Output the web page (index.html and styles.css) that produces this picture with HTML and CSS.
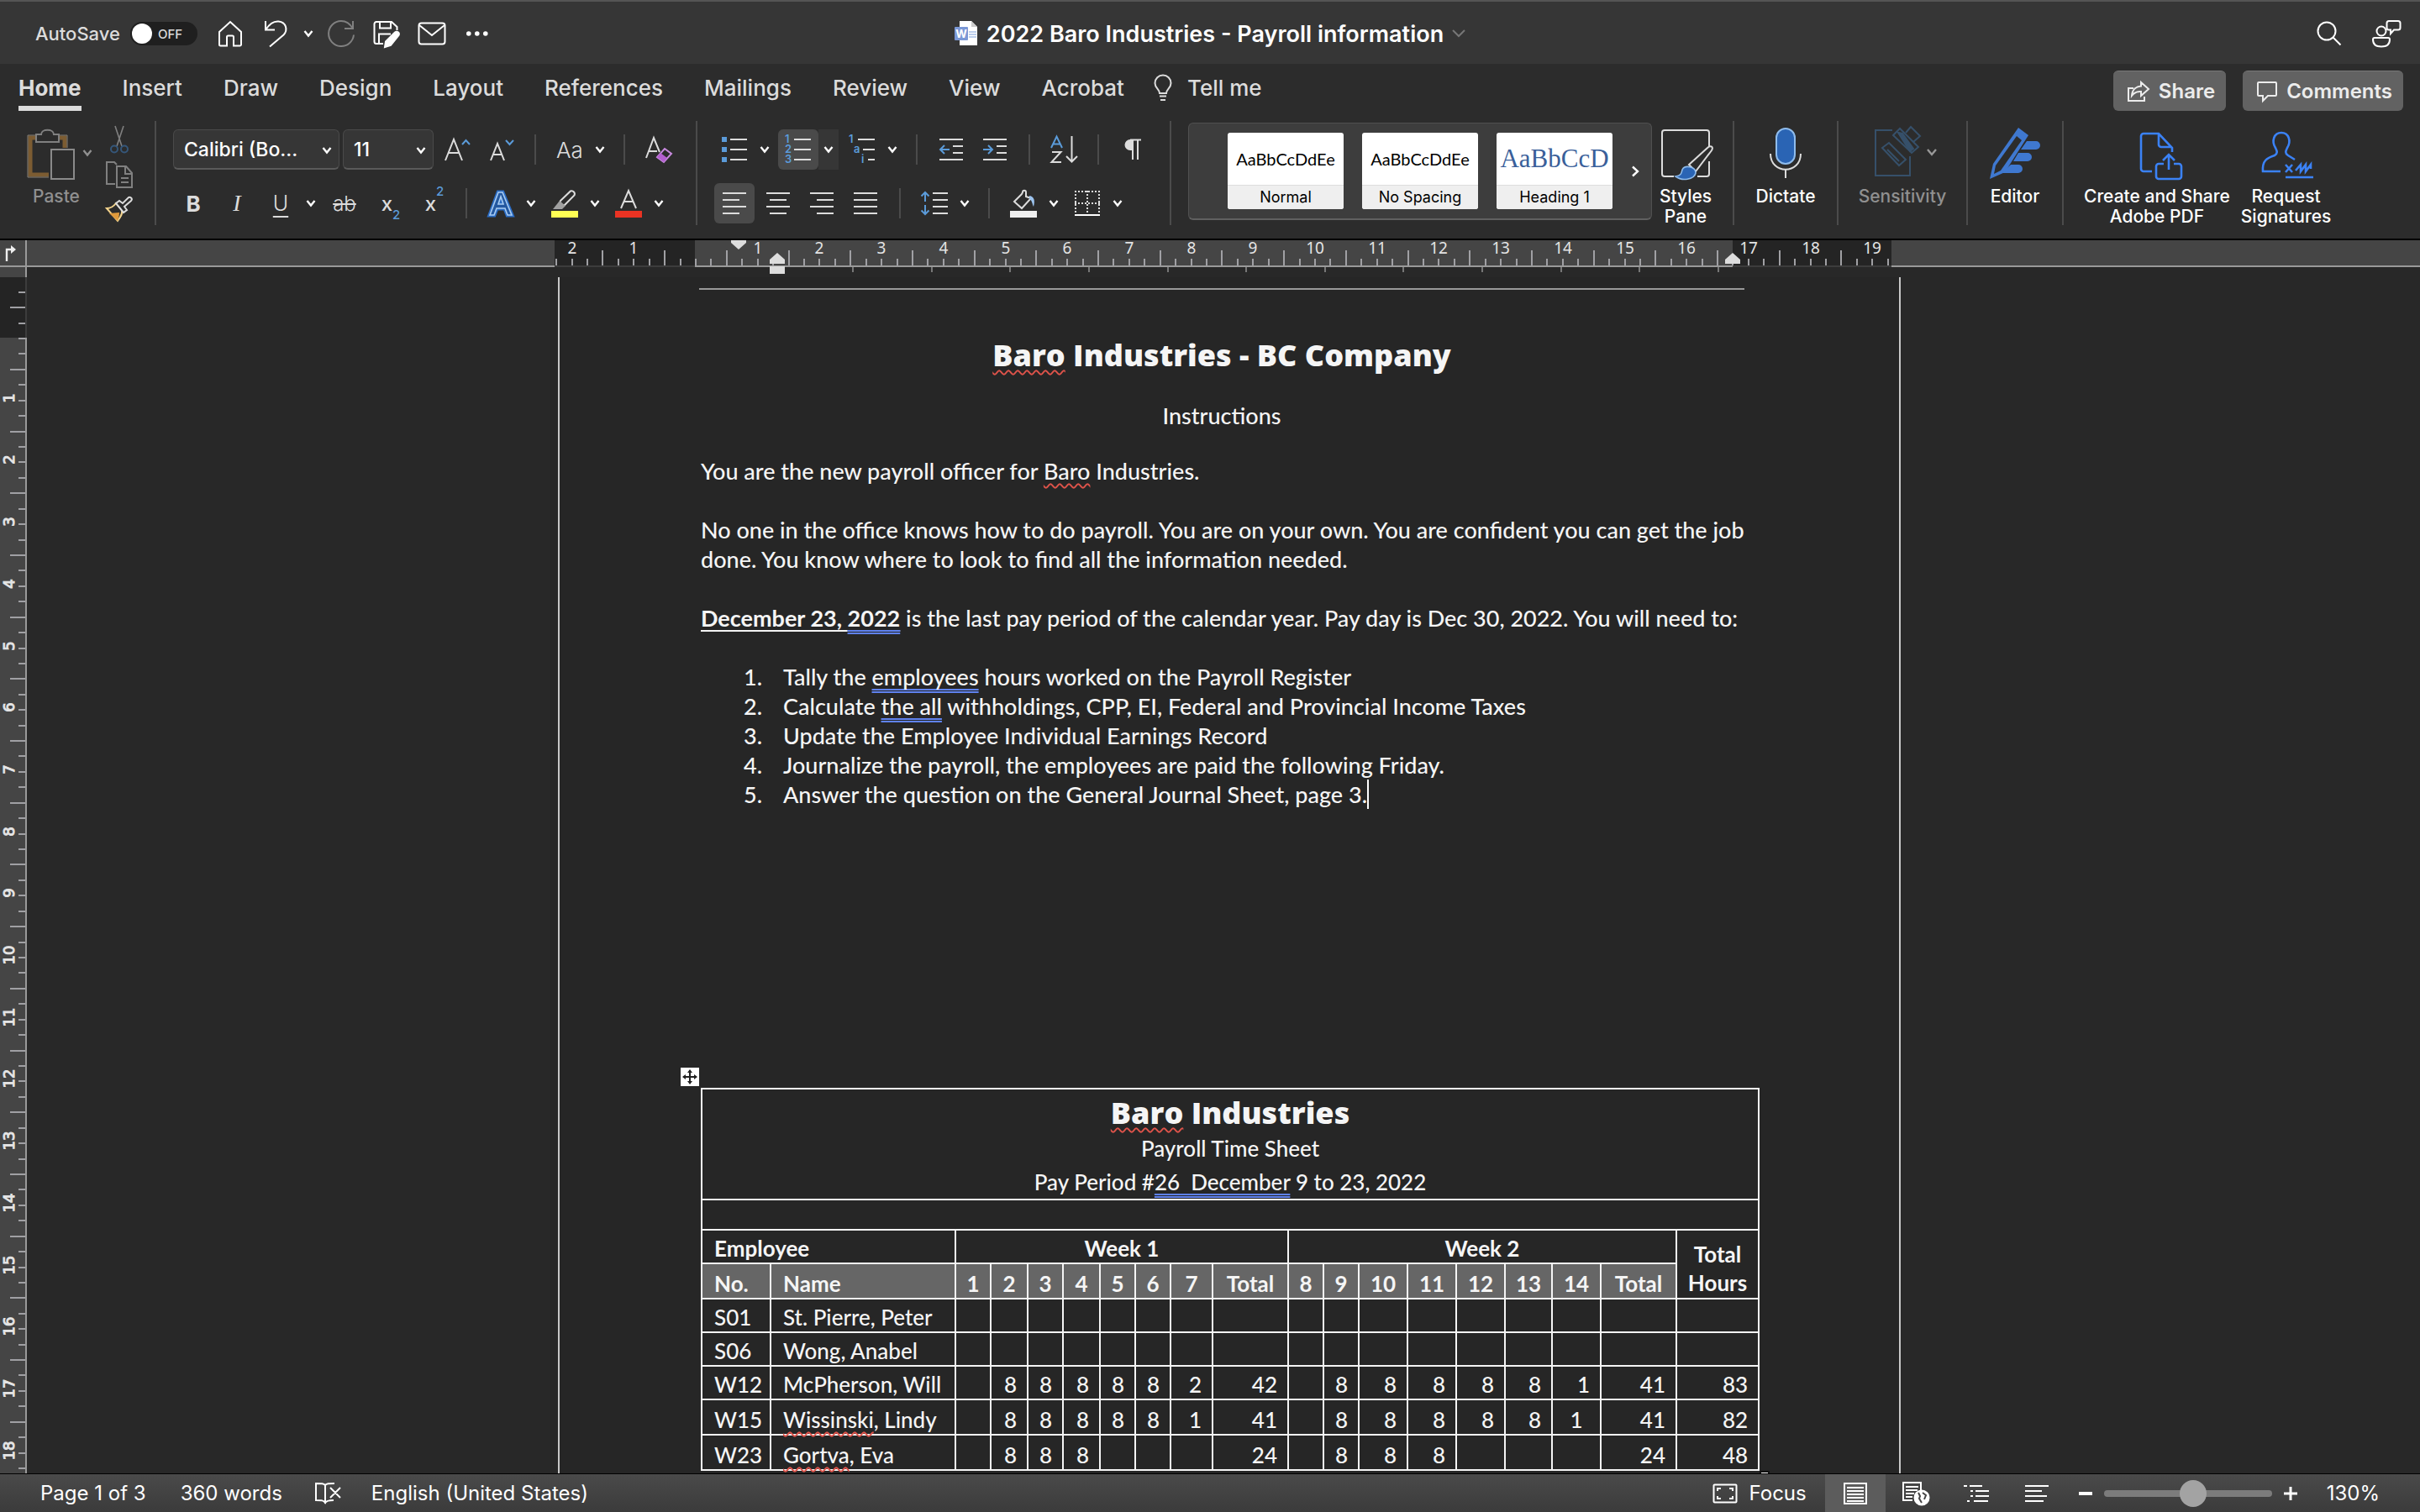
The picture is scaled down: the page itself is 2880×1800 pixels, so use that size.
FILE: index.html
```
<!DOCTYPE html>
<html lang="en">

<head>
    <meta charset="UTF-8">
    <meta name="viewport" content="width=device-width, initial-scale=1.0">
    <title>2022 Baro Industries - Payroll information</title>
    <link rel="stylesheet" href="styles.css">
</head>

<body>
    <!-- shared chevron -->
    <svg class="defs" width="0" height="0">
        <symbol id="chev" viewBox="0 0 12 10"><path d="M1.5 2l4.5 5.500 4.500-5.500" fill="none" stroke="currentColor" stroke-width="2.400"/></symbol>
    </svg>

    <header class="titlebar">
        <div class="quick left-tools">
            <label class="autosave">AutoSave
                <span class="pill"><input type="checkbox" class="knob">OFF</span>
            </label>
            <button class="qbtn" aria-label="Home"><svg width="30" height="32" viewBox="0 0 30 32"><path d="M2 14L15 2l13 12v15a1.500 1.500 0 0 1-1.500 1.500H19V20a1.500 1.500 0 0 0-1.500-1.500h-5A1.500 1.500 0 0 0 11 20v10.500H3.500A1.500 1.500 0 0 1 2 29z"/></svg></button>
            <button class="qbtn" aria-label="Undo"><svg width="30" height="34" viewBox="0 0 30 34"><path d="M3 2v10.500h11M3.500 12C8 5 13 2 18.500 2.500c9 1 11.500 10 6 16L8 32.500"/></svg></button>
            <button class="cbtn" aria-label="Undo options"><svg width="12" height="10"><use href="#chev"/></svg></button>
            <button class="qbtn dim" aria-label="Redo"><svg width="34" height="34" viewBox="0 0 34 34"><path d="M31 2v9H21M30.500 10.500C27 4.500 22.500 2 17 2A15 15 0 1 0 32 18.500"/></svg></button>
            <button class="qbtn" aria-label="Save"><svg width="32" height="32" viewBox="0 0 32 32"><path d="M12 28H4a2.500 2.500 0 0 1-2.500-2.500v-21A2.500 2.500 0 0 1 4 2h18l6.500 6v4M8 2v7.500h13V2M7 28V16.500h14"/><path class="solid" d="M26 14.500c2.500-2 6 .5 4.500 3.500L21 30l-7 2 1-6.500z"/></svg></button>
            <button class="qbtn" aria-label="Mail"><svg width="34" height="28" viewBox="0 0 34 28"><rect x="1.500" y="1.500" width="31" height="25" rx="3"/><path d="M2 4l15 12L32 4"/></svg></button>
            <button class="qbtn" aria-label="More"><svg width="28" height="8" viewBox="0 0 28 8"><path class="solid nostroke" d="M1 4a2.800 2.800 0 1 0 5.600 0A2.800 2.800 0 1 0 1 4M11 4a2.800 2.800 0 1 0 5.600 0A2.800 2.800 0 1 0 11 4M21 4a2.800 2.800 0 1 0 5.600 0A2.800 2.800 0 1 0 21 4"/></svg></button>
        </div>
        <div class="doctitle">
            <svg width="28" height="30" viewBox="0 0 28 30"><path d="M6 0h14l7 7v22H6z" fill="#fff"/><path d="M20 0v7h7z" fill="#ccc"/><path d="M17 13h9M17 16h9M17 19h9" stroke="#7d9fdc" stroke-width="1.200"/><rect y="7" width="16" height="16" rx="1" fill="#7b98d6"/><text x="8" y="20" text-anchor="middle" font-family="Inter, sans-serif" font-size="13" font-weight="700" fill="#fff">W</text></svg>
            <h1>2022 Baro Industries - Payroll information</h1>
            <svg width="16" height="12" viewBox="0 0 16 12"><path d="M1 2l7 7 7-7" fill="none" stroke="#777" stroke-width="2"/></svg>
        </div>
        <div class="quick right">
            <button class="qbtn wide" aria-label="Search"><svg width="30" height="30" viewBox="0 0 30 30"><circle cx="12" cy="12" r="10.500"/><path d="M19.500 19.500l9 9"/></svg></button>
            <button class="qbtn wide" aria-label="Account"><svg width="36" height="34" viewBox="0 0 36 34"><circle cx="12" cy="14" r="5.500"/><path d="M4 22h16a2 2 0 0 1 2 2c0 6-4 8.500-10 8.500S2 30 2 24a2 2 0 0 1 2-2zM21 2h11a2.500 2.500 0 0 1 2.500 2.500V10a2.500 2.500 0 0 1-2.500 2.500h-5L23 17v-4.500h-2A2.500 2.500 0 0 1 18.500 10V4.500A2.500 2.500 0 0 1 21 2z"/></svg></button>
        </div>
    </header>

    <nav class="tabs">
        <a class="tab active" href="#">Home</a>
        <a class="tab" href="#">Insert</a>
        <a class="tab" href="#">Draw</a>
        <a class="tab" href="#">Design</a>
        <a class="tab" href="#">Layout</a>
        <a class="tab" href="#">References</a>
        <a class="tab" href="#">Mailings</a>
        <a class="tab" href="#">Review</a>
        <a class="tab" href="#">View</a>
        <a class="tab" href="#">Acrobat</a>
        <a class="tab tellme" href="#"><svg width="22" height="32" viewBox="0 0 22 32"><path d="M7 22c0-5-5.500-6-5.500-12A9.500 9.500 0 0 1 20.500 10c0 6-5.500 7-5.500 12zM7 25.500h8M8 30h6" fill="none" stroke="#dcdcdc" stroke-width="2"/></svg>Tell me</a>
        <div class="actions">
            <button class="action"><svg width="28" height="26" viewBox="0 0 28 26"><path d="M8 9H2v15h19v-5M17 2l9 8-9 8v-5c-5-.5-8 1-11 5 .5-7 5-11 11-11.500z"/></svg>Share</button>
            <button class="action"><svg width="26" height="26" viewBox="0 0 26 26"><path d="M3 2h20a1 1 0 0 1 1 1v14a1 1 0 0 1-1 1H14l-6 6v-6H3a1 1 0 0 1-1-1V3a1 1 0 0 1 1-1z"/></svg>Comments</button>
        </div>
    </nav>

    <div class="ribbon">
        <div class="group clipboard">
            <button class="big off"><svg width="64" height="64" viewBox="4 0 64 64">
                <path d="M13 14H5v44h22M38 14h8v12" fill="none" stroke="#7c5c32" stroke-width="5"/>
                <path d="M13 11H2v50h25M38 11h11v15" fill="none" stroke="#858078" stroke-width="1"/>
                <path d="M12 19v-9h6c0-7 15-7 15 0h6v9z" fill="#2c2c2c" stroke="#808080" stroke-width="2"/>
                <rect x="30" y="28" width="27" height="35" fill="#2c2c2c" stroke="#8a8a8a" stroke-width="2"/></svg>Paste</button>
            <button class="cbtn off" aria-label="Paste options"><svg width="12" height="10"><use href="#chev"/></svg></button>
            <div class="stack">
                <button class="sbtn" aria-label="Cut"><svg width="24" height="34" viewBox="0 0 24 34" fill="none" stroke-width="1.600"><path d="M7 1l8 24M17 1L9 25" stroke="#808080"/><circle cx="6" cy="28.500" r="4" stroke="#35577a" stroke-width="2"/><circle cx="18" cy="28.500" r="4" stroke="#35577a" stroke-width="2"/></svg></button>
                <button class="sbtn" aria-label="Copy"><svg width="34" height="34" viewBox="0 0 34 34" fill="none" stroke="#808080" stroke-width="2"><path d="M12 28H2V2h9l3 3M14 7h11l7 8v17H14zM24 8v8h8M19 21h9M19 26h9"/></svg></button>
                <button class="sbtn" aria-label="Format painter"><svg width="34" height="32" viewBox="0 0 34 32"><path d="M2 14l13 15c3-4 6-8 5-13l-7-8C10 12 6 14 2 14z" fill="#2c2c2c" stroke="#f1d28c" stroke-width="2"/><path d="M5 20l12-1c0 4-1 7-2 10z" fill="#e09a3c"/><path d="M13 8l4-3 4 3 7-7c3-1 5 2 3 4l-8 7 3 4-4 3z" fill="#2c2c2c" stroke="#ddd" stroke-width="2"/></svg></button>
            </div>
        </div>

        <div class="group rows">
            <div class="row">
                <div class="picker"><select class="fontname" aria-label="Font"><option>Calibri (Bo...</option></select><svg width="12" height="10"><use href="#chev"/></svg></div>
                <div class="picker"><select class="fontsize" aria-label="Font size"><option>11</option></select><svg width="12" height="10"><use href="#chev"/></svg></div>
                <button class="ib" aria-label="Grow font"><svg width="32" height="30" viewBox="0 0 32 30"><path d="M2 28L12 3l10 25M6 19h12" class="ln"/><path d="M22 9l4.500-5L31 9" class="bl"/></svg></button>
                <button class="ib" aria-label="Shrink font"><svg width="32" height="30" viewBox="0 0 32 30"><path d="M4 28l8-20 8 20M7 21h10" class="ln"/><path d="M22 4l4.500 5L31 4" class="bl"/></svg></button>
                <span class="sep"></span>
                <button class="ib glyph light">Aa</button>
                <button class="cbtn" aria-label="Case options"><svg width="12" height="10"><use href="#chev"/></svg></button>
                <span class="sep"></span>
                <button class="ib" aria-label="Clear formatting"><svg width="34" height="34" viewBox="0 0 34 34"><path d="M2 27L11 3l7 17M5 19h10" class="ln"/><path d="M24 16l8 6-9 10-8-6z" fill="#2c2c2c" stroke="#c98be0" stroke-width="2"/><path d="M19 21l8 6-4 5-8-6z" fill="#b45fd0"/></svg></button>
            </div>
            <div class="row">
                <button class="ib glyph bold">B</button>
                <button class="ib glyph italic">I</button>
                <button class="ib glyph under">U</button>
                <button class="cbtn" aria-label="Underline options"><svg width="12" height="10"><use href="#chev"/></svg></button>
                <button class="ib glyph strike">ab</button>
                <button class="ib glyph small">x<sub>2</sub></button>
                <button class="ib glyph small">x<sup>2</sup></button>
                <span class="sep"></span>
                <button class="ib" aria-label="Text effects"><svg width="34" height="34" viewBox="0 0 34 34"><path d="M4 31L14 4h5l11 27h-5l-3-8H12l-3 8zM14 18h6l-3-9z" fill="#2c2c2c" stroke="#2b6cc4" stroke-width="5"/><path d="M4 31L14 4h5l11 27h-5l-3-8H12l-3 8zM14 18h6l-3-9z" fill="#2458a0" stroke="#a8ccf2" stroke-width="1.600"/></svg></button>
                <button class="cbtn" aria-label="Effect options"><svg width="12" height="10"><use href="#chev"/></svg></button>
                <button class="ib" aria-label="Highlight"><svg width="34" height="34" viewBox="0 0 34 34"><rect x="1" y="26" width="32" height="8" fill="#ffff54"/><path d="M12 14L24 2.500c3-1 6 2 4.500 5L17 19l-4 1-2-2z" class="ln"/><path d="M11 14l7 6-4 4H3z" fill="#a0a0a0"/></svg></button>
                <button class="cbtn" aria-label="Highlight options"><svg width="12" height="10"><use href="#chev"/></svg></button>
                <button class="ib" aria-label="Font color"><svg width="34" height="34" viewBox="0 0 34 34"><rect x="1" y="26" width="32" height="8" fill="#ea3323"/><path d="M8 23l9-21 9 21M11 15h12" class="ln"/></svg></button>
                <button class="cbtn" aria-label="Color options"><svg width="12" height="10"><use href="#chev"/></svg></button>
            </div>
        </div>

        <div class="group rows">
            <div class="row">
                <button class="ib" aria-label="Bullets"><svg width="32" height="32" viewBox="0 0 32 32"><path d="M1 1h6v6H1zM1 13h6v6H1zM1 25h6v6H1z" fill="#5b9bd9"/><path d="M11 4h20M11 16h20M11 28h20" class="ln"/></svg></button><button class="cbtn joined" aria-label="Bullet options"><svg width="12" height="10"><use href="#chev"/></svg></button>
                <button class="ib on" aria-label="Numbering"><svg width="32" height="34" viewBox="0 0 32 34"><g class="num"><text x="0" y="9">1</text><text x="0" y="21">2</text><text x="0" y="33">3</text></g><path d="M11 5h20M11 17h20M11 29h20" class="ln"/></svg></button><button class="cbtn joined onc" aria-label="Numbering options"><svg width="12" height="10"><use href="#chev"/></svg></button>
                <button class="ib" aria-label="Multilevel list"><svg width="32" height="34" viewBox="0 0 32 34"><g class="num"><text x="0" y="9">1</text><text x="6" y="21">a</text><text x="15" y="33">i</text></g><path d="M11 5h20M17 17h14M23 29h8" class="ln"/></svg></button><button class="cbtn joined" aria-label="Multilevel options"><svg width="12" height="10"><use href="#chev"/></svg></button>
                <span class="sep"></span>
                <button class="ib" aria-label="Decrease indent"><svg width="30" height="28" viewBox="0 0 30 28"><path d="M1 2h28M17 10h12M17 18h12M1 26h28" class="ln"/><path d="M13 14H2M7 9l-5 5 5 5" class="bl"/></svg></button>
                <button class="ib" aria-label="Increase indent"><svg width="30" height="28" viewBox="0 0 30 28"><path d="M1 2h28M17 10h12M17 18h12M1 26h28" class="ln"/><path d="M1 14h11M7 9l5 5-5 5" class="bl"/></svg></button>
                <span class="sep"></span>
                <button class="ib" aria-label="Sort"><svg width="34" height="34" viewBox="0 0 34 34"><path d="M2 15L8.500 1.500 15 15M4 10.500h9" class="bl"/><path d="M3 20h10.500L2.500 32H14M26.500 1v30M20 25l6.500 6.500L33 25" class="ln"/></svg></button>
                <span class="sep"></span>
                <button class="ib" aria-label="Show marks"><svg width="22" height="26" viewBox="0 0 22 26"><path d="M10 1H8a6.500 6.500 0 0 0 0 13h2z" fill="#dcdcdc"/><path d="M8 1.500h13M11 1v24M17 1v24" class="ln"/></svg></button>
            </div>
            <div class="row">
                <button class="ib on" aria-label="Align left"><svg width="30" height="28" viewBox="0 0 30 28"><path d="M1 2h28M1 10h20M1 18h28M1 26h20" class="ln"/></svg></button>
                <button class="ib" aria-label="Center"><svg width="30" height="28" viewBox="0 0 30 28"><path d="M1 2h28M5 10h20M1 18h28M5 26h20" class="ln"/></svg></button>
                <button class="ib" aria-label="Align right"><svg width="30" height="28" viewBox="0 0 30 28"><path d="M1 2h28M9 10h20M1 18h28M9 26h20" class="ln"/></svg></button>
                <button class="ib" aria-label="Justify"><svg width="30" height="28" viewBox="0 0 30 28"><path d="M1 2h28M1 10h28M1 18h28M1 26h28" class="ln"/></svg></button>
                <span class="sep"></span>
                <button class="ib" aria-label="Line spacing"><svg width="34" height="30" viewBox="0 0 34 30"><path d="M15 3h18M15 11h18M15 19h18M15 27h18" class="ln"/><path d="M6 13V2M1.500 6.500L6 2l4.500 4.500M6 17v11M1.500 23.500L6 28l4.500-4.500" class="bl"/></svg></button><button class="cbtn joined" aria-label="Spacing options"><svg width="12" height="10"><use href="#chev"/></svg></button>
                <span class="sep"></span>
                <button class="ib" aria-label="Shading"><svg width="34" height="34" viewBox="0 0 34 34"><rect x="1" y="26" width="32" height="8" fill="#efefef"/><path d="M15 6L6 15l9 8 11-12-6-2V4c0-3-4-3-4 0z" class="ln"/><path d="M24 8c6 1 7 6 5 13-2-3-1-7-5-9z" fill="#9cc3ee"/></svg></button><button class="cbtn joined" aria-label="Shading options"><svg width="12" height="10"><use href="#chev"/></svg></button>
                <button class="ib" aria-label="Borders"><svg width="32" height="32" viewBox="0 0 32 32"><path d="M1 2h30M1 16h30M2 1v27M16 1v27M30 1v27" fill="none" stroke="#dcdcdc" stroke-width="2" stroke-dasharray="2 2"/><path d="M1 30h30" stroke="#fff" stroke-width="2"/></svg></button><button class="cbtn joined" aria-label="Border options"><svg width="12" height="10"><use href="#chev"/></svg></button>
            </div>
        </div>

        <div class="group stylesgroup">
            <div class="gallery">
                <button class="card"><span class="sample">AaBbCcDdEe</span><span class="cap">Normal</span></button>
                <button class="card"><span class="sample">AaBbCcDdEe</span><span class="cap">No Spacing</span></button>
                <button class="card"><span class="sample heading">AaBbCcD</span><span class="cap">Heading 1</span></button>
                <button class="next" aria-label="More styles"><svg width="10" height="14" viewBox="0 0 10 14"><path d="M2 1.500L8 7l-6 5.500" fill="none" stroke="#fff" stroke-width="2.400"/></svg></button>
            </div>
            <button class="big pane"><svg width="64" height="64" viewBox="0 0 64 64" fill="none"><path d="M18 60H7a3 3 0 0 1-3-3V8a3 3 0 0 1 3-3h50a3 3 0 0 1 3 3v16M60 42v15a3 3 0 0 1-3 3H46" stroke="#dcdcdc" stroke-width="2"/><path d="M36 46L58 26c3-3 8-2 5 3L44 54z" fill="#2c2c2c" stroke="#dcdcdc" stroke-width="2"/><path d="M20 60c7-1 7-4 8-8 3-6 16-4 16 4-2 8-16 10-24 4z" fill="#2a64b4" stroke="#8fbcec" stroke-width="1.600"/></svg>Styles<br>Pane</button>
        </div>

        <div class="group solo"><button class="big"><svg width="64" height="64" viewBox="0 0 64 64" fill="none"><rect x="21" y="3" width="22" height="42" rx="11" fill="#2a64b4" stroke="#8fbcec" stroke-width="2"/><path d="M14 33c0 25 36 25 36 0M32 52v10" stroke="#dcdcdc" stroke-width="2"/></svg>Dictate</button></div>

        <div class="group solo sens"><button class="big off"><svg width="78" height="64" viewBox="-3 0 78 64" fill="none" stroke="#36506a" stroke-width="2"><path d="M24 5H4v54h41V36"/><path d="M12 26l8-6 20 20-8 7zM18 28l14 14M25 11l8-8 22 22-8 7z"/><path d="M31 8l14 22 4-3L36 9z" fill="#36506a"/><path d="M40 8l6-7 11 11-8 7"/><path d="M66 28l5 6 5-6" stroke="#999" stroke-width="2.400"/></svg>Sensitivity</button></div>

        <div class="group solo editor"><button class="big"><svg width="64" height="64" viewBox="0 0 64 64"><path d="M36 2l12 9-28 44L2 63l4-18z" fill="#3f78d0"/><path d="M34 12l6 5-25 36-8 4 2-10z" fill="#2c2c2c"/><path d="M46 18h11a5 5 0 0 1 0 10H39zM36 32h11a5 5 0 0 1 0 10H30zM27 46h9a5 5 0 0 1 0 10H16z" fill="#3f78d0"/></svg>Editor</button></div>

        <div class="group acrobat">
            <button class="big"><svg width="64" height="64" viewBox="0 0 64 64" fill="none" stroke="#3b82f6" stroke-width="2.600"><path d="M26 54H16a3 3 0 0 1-3-3V12a3 3 0 0 1 3-3h18l16 17v5M34 9v13a3 3 0 0 0 3 3h12M40 45h-6a3 3 0 0 0-3 3v12a3 3 0 0 0 3 3h24a3 3 0 0 0 3-3V48a3 3 0 0 0-3-3h-6M46 52V34M39 41l7-7 7 7"/></svg>Create and Share<br>Adobe PDF</button>
            <button class="big"><svg width="64" height="64" viewBox="0 0 64 64" fill="none" stroke="#3b82f6" stroke-width="2.600"><path d="M25 54H4c-1-13 5-16 14-19 4-3 3-5 1-9-5-8-2-18 7-18s12 10 7 18c-2 4-3 6 1 9l8 5M31 46l8 9M39 46l-8 9M43 53l6-7v8l6-8v8l6-8v5M31 61h33"/></svg>Request<br>Signatures</button>
        </div>
    </div>

    <div class="rulerbar">
        <div class="corner"><svg width="16" height="22" viewBox="0 0 16 22"><path d="M3 20V6h5" fill="none" stroke="#eee" stroke-width="2.400"/><path d="M8 1l6 5-6 5z" fill="#eee"/></svg></div>
        <div class="hruler">
            <svg id="hruler" width="1598" height="32"></svg>
        </div>
    </div>

    <main class="workspace">
        <div class="vruler"><svg id="vruler" width="32" height="100%"></svg></div>
        <div class="canvas">
            <article class="page">
                <hr class="headline">
                <h2 class="display"><span class="spell">Baro</span> Industries - BC Company</h2>
                <p class="center">Instructions</p>
                <p>You are the new payroll officer for <span class="spell">Baro</span> Industries.</p>
                <p>No one in the office knows how to do payroll. You are on your own. You are confident you can get the job done. You know where to look to find all the information needed.</p>
                <p><b class="date">December 23, <span class="grammar">2022</span></b> is the last pay period of the calendar year. Pay day is Dec 30, 2022. You will need to:</p>
                <ol>
                    <li>Tally the <span class="grammar">employees</span> hours worked on the Payroll Register</li>
                    <li>Calculate <span class="grammar">the all</span> withholdings, CPP, EI, Federal and Provincial Income Taxes</li>
                    <li>Update the Employee Individual Earnings Record</li>
                    <li>Journalize the payroll, the employees are paid the following Friday.</li>
                    <li>Answer the question on the General Journal Sheet, page 3.<span class="caret"></span></li>
                </ol>

                <div class="sheet">
                    <span class="handle"><svg width="22" height="22" viewBox="0 0 22 22"><path d="M11 3v16M3 11h16" stroke="#222" stroke-width="2"/><path d="M11 2l3 4H8zM11 20l3-4H8zM2 11l4-3v6zM20 11l-4-3v6z" fill="#222"/></svg></span>
                    <table>
                        <colgroup>
                            <col class="c-no"><col class="c-name">
                            <col class="c-s"><col class="c-m"><col class="c-s"><col class="c-m"><col class="c-s"><col class="c-s"><col class="c-l"><col class="c-t">
                            <col class="c-s"><col class="c-s"><col class="c-d"><col class="c-d"><col class="c-d"><col class="c-e"><col class="c-d"><col class="c-t"><col class="c-h">
                        </colgroup>
                        <tr class="r-title"><td colspan="19"><div class="display"><span class="spell">Baro</span> Industries</div>Payroll Time Sheet<br>Pay Period #<span class="grammar">26&nbsp; December</span> 9 to 23, 2022</td></tr>
                        <tr class="r-gap"><td colspan="19"></td></tr>
                        <tr class="r-row"><th colspan="2" class="left">Employee</th><th colspan="8">Week 1</th><th colspan="8">Week 2</th><th rowspan="2" class="hours">Total Hours</th></tr>
                        <tr class="r-tall shade"><th class="left">No.</th><th class="left">Name</th><th>1</th><th>2</th><th>3</th><th>4</th><th>5</th><th>6</th><th>7</th><th>Total</th><th>8</th><th>9</th><th>10</th><th>11</th><th>12</th><th>13</th><th>14</th><th>Total</th></tr>
                        <tr class="r-row"><td class="left">S01</td><td class="left">St. Pierre, Peter</td><td></td><td></td><td></td><td></td><td></td><td></td><td></td><td></td><td></td><td></td><td></td><td></td><td></td><td></td><td></td><td></td><td></td></tr>
                        <tr class="r-row"><td class="left">S06</td><td class="left">Wong, Anabel</td><td></td><td></td><td></td><td></td><td></td><td></td><td></td><td></td><td></td><td></td><td></td><td></td><td></td><td></td><td></td><td></td><td></td></tr>
                        <tr class="r-row"><td class="left">W12</td><td class="left">McPherson, Will</td><td></td><td>8</td><td>8</td><td>8</td><td>8</td><td>8</td><td>2</td><td>42</td><td></td><td>8</td><td>8</td><td>8</td><td>8</td><td>8</td><td>1</td><td>41</td><td>83</td></tr>
                        <tr class="r-tall"><td class="left">W15</td><td class="left"><span class="spell">Wissinski</span>, Lindy</td><td></td><td>8</td><td>8</td><td>8</td><td>8</td><td>8</td><td>1</td><td>41</td><td></td><td>8</td><td>8</td><td>8</td><td>8</td><td>8</td><td class="mid">1</td><td>41</td><td>82</td></tr>
                        <tr class="r-tall"><td class="left">W23</td><td class="left"><span class="spell">Gortva</span>, Eva</td><td></td><td>8</td><td>8</td><td>8</td><td></td><td></td><td></td><td>24</td><td></td><td>8</td><td>8</td><td>8</td><td></td><td></td><td></td><td>24</td><td>48</td></tr>
                    </table>
                    <span class="resize"></span>
                </div>
            </article>
        </div>
    </main>

    <footer class="status">
        <span class="pages">Page 1 of 3</span>
        <span class="words">360 words</span>
        <button class="proof" aria-label="Proofing"><svg width="32" height="28" viewBox="0 0 32 28" fill="none" stroke="#fff" stroke-width="2"><path d="M13 4v22M13 4c-2-2-4-2-11-2v20c7 0 9 0 11 3 1-2 3-3 10-3M13 4c2-2 4-2 11-2M19 7l12 12M31 7L19 19"/></svg></button>
        <span>English (United States)</span>
        <div class="view">
            <button class="focus"><svg width="30" height="24" viewBox="0 0 30 24" fill="none" stroke="#fff" stroke-width="2"><rect x="1.500" y="1.500" width="27" height="21" rx="1"/><path d="M6 9V6h4M20 6h4v3M6 15v3h4M20 18h4v-3"/></svg>Focus</button>
            <button class="vbtn current" aria-label="Print layout"><svg width="28" height="26" viewBox="0 0 28 26" fill="none" stroke="#fff" stroke-width="2"><rect x="1" y="1" width="26" height="24"/><path d="M4 6h20M4 10h20M4 14h20M4 18h20M4 22h20"/></svg></button>
            <button class="vbtn" aria-label="Web layout"><svg width="34" height="28" viewBox="0 0 34 28" fill="none" stroke="#fff" stroke-width="2"><path d="M13 22H2V1h21v9M5 6h15M5 10h14M5 14h10M5 18h8"/><circle cx="24" cy="19" r="8.500" fill="#fff"/><path d="M20 13l2 4-1 3 3 5M25 13l4 3-2 5" stroke="#444"/></svg></button>
            <button class="vbtn" aria-label="Outline"><svg width="30" height="22" viewBox="0 0 30 22" fill="none" stroke="#fff" stroke-width="2"><path d="M0 2h4M7 2h15M8 8h3M14 8h16M8 14h3M14 14h16M4 20h3M12 20h17"/></svg></button>
            <button class="vbtn" aria-label="Draft"><svg width="28" height="22" viewBox="0 0 28 22" fill="none" stroke="#fff" stroke-width="2"><path d="M0 2h28M0 8h20M0 14h26M0 20h22"/></svg></button>
            <button class="zbtn" aria-label="Zoom out"><svg width="16" height="16" viewBox="0 0 16 16"><path d="M0 8h16" stroke="#fff" stroke-width="4"/></svg></button>
            <input type="range" class="zoom" min="0" max="100" value="54" aria-label="Zoom">
            <button class="zbtn" aria-label="Zoom in"><svg width="16" height="16" viewBox="0 0 16 16"><path d="M0 8h16M8 0v16" stroke="#fff" stroke-width="3"/></svg></button>
            <span class="percent">130%</span>
        </div>
    </footer>

    <script src="script.js"></script>
</body>

</html>
```
FILE: styles.css
```
* {
    margin: 0;
    box-sizing: border-box;
}

body {
    background-color: #282828;
    color: #fff;
    font-family: Inter, "Liberation Sans", sans-serif;
    display: flex;
    flex-direction: column;
    height: 100vh;
    overflow: hidden;
}

button {
    all: unset;
    box-sizing: border-box;
    display: flex;
    align-items: center;
    justify-content: center;
    cursor: pointer;
}

a {
    color: inherit;
    text-decoration: none;
}

svg {
    flex: none;
    overflow: visible;
}

.defs {
    position: absolute;
}

/* title bar */
.titlebar {
    display: grid;
    grid-template-columns: 1fr auto 1fr;
    align-items: center;
    height: 76px;
    padding: 2px 6px 0;
    border-top: 2px solid #555;
    background: #363636;
}

.quick {
    display: flex;
    align-items: center;
}

.left-tools {
    padding-left: 36px;
}

.quick.right {
    justify-content: flex-end;
}

.autosave {
    display: flex;
    align-items: center;
    gap: 12px;
    margin-right: 12px;
    font-size: 22px;
    font-weight: 500;
    color: #dcdcdc;
}

.pill {
    display: flex;
    align-items: center;
    gap: 7px;
    width: 80px;
    height: 28px;
    padding-left: 2px;
    border-radius: 14px;
    background: #1f1f1f;
    font-size: 15px;
}

.knob {
    appearance: none;
    width: 24px;
    height: 24px;
    border-radius: 12px;
    background: #fff;
}

.qbtn {
    width: 54px;
    height: 40px;
}

.qbtn.wide {
    width: 68px;
}

.qbtn path,
.qbtn circle,
.qbtn rect {
    fill: none;
    stroke: #fff;
    stroke-width: 2;
}

.qbtn .solid {
    fill: #fff;
}

.qbtn .nostroke {
    stroke: none;
}

.qbtn.dim path {
    stroke: #808080;
}

.cbtn {
    width: 24px;
    height: 48px;
    color: #fff;
}

.doctitle {
    display: flex;
    align-items: center;
    gap: 10px;
}

.doctitle h1 {
    font-size: 27px;
    font-weight: 600;
}

/* tabs */
.tabs {
    display: flex;
    gap: 49px;
    height: 68px;
    padding: 8px 20px 0 22px;
    background: #2c2c2c;
    color: #dcdcdc;
    font-size: 26px;
    font-weight: 500;
}

.tab {
    height: 48px;
    line-height: 42px;
    border-bottom: 6px solid transparent;
}

.tab.active {
    font-weight: 700;
    border-bottom: 6px solid #dcdcdc;
}

.tellme {
    display: flex;
    align-items: center;
    gap: 18px;
    margin-left: -14px;
}

.actions {
    display: flex;
    gap: 20px;
    margin-left: auto;
}

.action {
    gap: 10px;
    height: 48px;
    padding: 0 13px 0 16px;
    border-radius: 6px;
    background: #626262;
    border-top: 1px solid #777;
    font-size: 24px;
    font-weight: 600;
    color: #ececec;
}

.action path {
    fill: none;
    stroke: #ececec;
    stroke-width: 2;
}

/* ribbon */
.ribbon {
    display: flex;
    height: 142px;
    padding-bottom: 16px;
    background: #2c2c2c;
    border-bottom: 2px solid #000;
}

.group {
    display: flex;
    height: 124px;
    padding: 0 20px;
    border-right: 2px solid #4b4b4b;
}

.group.acrobat {
    gap: 13px;
    padding-left: 24px;
    border-right: none;
}

.clipboard {
    width: 186px;
    padding: 0 0 0 35px;
}

.clipboard .cbtn {
    margin: 14px 2px 0 -7px;
}

.stack {
    display: flex;
    flex-direction: column;
    justify-content: space-between;
    padding-top: 4px;
}

.sbtn {
    width: 48px;
    height: 36px;
}

.big {
    flex-direction: column;
    justify-content: flex-start;
    padding-top: 6px;
    font-size: 21px;
    font-weight: 500;
    line-height: 24px;
    text-align: center;
}

.big svg {
    margin-bottom: 8px;
}

.off {
    color: #909090;
}

.rows {
    flex-direction: column;
    gap: 16px;
    padding-top: 10px;
}

.row {
    display: flex;
    gap: 4px;
}

.row .cbtn {
    margin-left: -4px;
}

.ib {
    width: 48px;
    height: 48px;
    color: #dcdcdc;
}

.ib.on {
    background: #4a4a4a;
    border-radius: 6px;
}

.onc {
    background: #363636;
}

.ln {
    fill: none;
    stroke: #dcdcdc;
    stroke-width: 2;
}

.bl {
    fill: none;
    stroke: #5b9bd9;
    stroke-width: 2;
}

.num {
    fill: #5b9bd9;
    font-size: 13px;
    font-weight: 600;
}

.sep {
    width: 26px;
    height: 36px;
    margin-top: 6px;
    background: linear-gradient(#4b4b4b, #4b4b4b) center / 2px 100% no-repeat;
}

.picker {
    position: relative;
}

.picker svg {
    position: absolute;
    right: 9px;
    top: 20px;
    pointer-events: none;
}

.picker select {
    appearance: none;
    height: 48px;
    padding: 0 12px;
    border: 1px solid #4a4a4a;
    border-bottom: 2px solid #5a5a5a;
    border-radius: 6px;
    background: #363636;
    color: #fff;
    font: 500 23px Inter, "Liberation Sans", sans-serif;
}

.fontname {
    width: 198px;
}

.fontsize {
    width: 108px;
}

.glyph {
    font-size: 28px;
}

.glyph.light {
    font-weight: 300;
    font-size: 26px;
}

.glyph.bold {
    font-size: 26px;
    font-weight: 700;
}

.glyph.italic {
    font-family: "Liberation Serif", serif;
    font-style: italic;
}

.glyph.under {
    font-size: 25px;
    font-weight: 300;
    text-decoration: underline;
    text-underline-offset: 6px;
}

.glyph.strike {
    font-size: 24px;
    font-weight: 300;
    text-decoration: line-through;
}

.glyph.small {
    padding-left: 6px;
    font-size: 24px;
    font-weight: 500;
}

.glyph sub,
.glyph sup {
    font-size: 15px;
    line-height: 20px;
    color: #5b9bd9;
}

.glyph sub {
    align-self: flex-end;
}

.glyph sup {
    align-self: flex-start;
}

.stylesgroup {
    gap: 4px;
}

.gallery {
    display: flex;
    align-items: center;
    gap: 22px;
    width: 552px;
    height: 116px;
    margin-top: 2px;
    padding-left: 46px;
    border: 1px solid #505050;
    border-bottom: 2px solid #606060;
    border-radius: 6px;
    background: #3d3d3d;
}

.card {
    flex-direction: column;
    width: 138px;
    height: 91px;
    border-radius: 3px;
    background: #fff;
    color: #000;
    overflow: hidden;
}

.sample {
    flex: 1;
    line-height: 62px;
    font-family: Lato, sans-serif;
    font-size: 20px;
    font-weight: 400;
}

.sample.heading {
    font-family: "Liberation Serif", serif;
    font-size: 31px;
    color: #3a5f9a;
}

.cap {
    align-self: stretch;
    height: 30px;
    border-top: 1px solid #ddd;
    background: #efefef;
    text-align: center;
    font-size: 18px;
    font-weight: 400;
    line-height: 28px;
}

.next {
    height: 48px;
}

.pane {
    width: 72px;
}

.solo {
    justify-content: center;
    width: 124px;
}

.solo.sens {
    width: 154px;
}

.solo.editor {
    width: 114px;
}

/* rulers */
.rulerbar {
    display: flex;
    height: 32px;
    background: #454545;
    border-bottom: 2px solid #999;
}

.corner {
    display: flex;
    align-items: center;
    width: 32px;
    height: 32px;
    padding-left: 5px;
    border-right: 2px solid #999;
}

.hruler {
    flex: 1;
    display: flex;
    justify-content: center;
    padding-left: 14px;
    position: relative;
    z-index: 1;
}

.hruler text,
.vruler text {
    fill: #e4e4e4;
    font-family: "Noto Sans", sans-serif;
    font-size: 19px;
    text-anchor: middle;
}

.vruler text {
    font-family: "DejaVu Sans", sans-serif;
    font-size: 18px;
    stroke: #e4e4e4;
    stroke-width: 1px;
}

.workspace {
    flex: 1;
    min-height: 0;
    display: flex;
    overflow: hidden;
}

.vruler {
    width: 32px;
    background: #454545;
    border-right: 2px solid #999;
}

.canvas {
    flex: 1;
    display: flex;
    justify-content: center;
    padding: 12px 0 0 14px;
}

/* document */
.page {
    width: 1598px;
    height: 1800px;
    padding: 13px 184px 0 166px;
    border-left: 2px solid #c8c8c8;
    border-right: 2px solid #c8c8c8;
    background: #262626;
    color: #f5f5f5;
    font-family: Lato, "Liberation Sans", sans-serif;
    font-size: 27px;
    font-weight: 500;
    line-height: 35px;
}

.headline {
    height: 2px;
    border: none;
    background: #999;
}

.display {
    font-family: "Open Sans", sans-serif;
    font-weight: 800;
    font-size: 36px;
}

h2.display {
    margin: 53px 0 0;
    line-height: 50px;
    text-align: center;
}

.page p {
    margin: 31px -10px 35px 2px;
}

.page p.center {
    margin: 29px 0 31px;
    text-align: center;
}

.page ol {
    padding-left: 100px;
    list-style: none;
    counter-reset: step;
}

.page li {
    counter-increment: step;
    display: flex;
    white-space: pre;
}

.page li::before {
    content: counter(step) ".";
    width: 47px;
    margin-left: -47px;
}

.spell {
    text-decoration: underline wavy #e0534a 2px;
    text-decoration-skip-ink: none;
    text-underline-offset: 4px;
}

.grammar {
    text-decoration: underline double #5f82f0 2px;
    text-decoration-skip-ink: none;
    text-underline-offset: 4px;
}

.date {
    text-decoration: underline #f5f5f5 2px;
    text-decoration-skip-ink: none;
    text-underline-offset: 4px;
}

.caret {
    width: 2px;
    height: 35px;
    background: #fff;
}

.sheet {
    position: relative;
    width: 1258px;
    margin: 332px 0 0 2px;
    font-size: 26px;
}

.handle {
    position: absolute;
    left: -24px;
    top: -24px;
    width: 22px;
    height: 22px;
    background: #fff;
    display: flex;
}

.resize {
    position: absolute;
    right: -14px;
    bottom: -12px;
    width: 12px;
    height: 12px;
    background: #fff;
    border: 2px solid #111;
}

table {
    width: 1258px;
    table-layout: fixed;
    border-collapse: collapse;
}

td,
th {
    padding: 0 12px 1px 0;
    border: 2px solid #f5f5f5;
    text-align: right;
    vertical-align: bottom;
    line-height: 32px;
}

th {
    padding: 0 0 1px;
    text-align: center;
}

.left {
    padding-left: 14px;
    padding-right: 0;
    text-align: left;
    white-space: nowrap;
}

.hours {
    line-height: 34px;
}

td.mid {
    padding-right: 0;
    text-align: center;
}

.shade th {
    background: #666;
}

.r-title {
    height: 130px;
}

.r-title td {
    padding: 0;
    text-align: center;
    vertical-align: top;
    line-height: 40px;
}

.r-title .display {
    padding-top: 6px;
    line-height: 44px;
}

.r-gap {
    height: 36px;
}

.r-row {
    height: 40px;
}

.r-tall {
    height: 42px;
}

.c-no { width: 82px; }
.c-name { width: 220px; }
.c-s { width: 42px; }
.c-m { width: 44px; }
.c-l { width: 50px; }
.c-e { width: 56px; }
.c-d { width: 58px; }
.c-t { width: 90px; }
.c-h { width: 98px; }

/* status bar */
.status {
    display: flex;
    align-items: center;
    height: 46px;
    padding-left: 48px;
    border-top: 1px solid #000;
    background: linear-gradient(#4a4a4a, #3b3b3b);
    font-size: 24px;
    position: relative;
}

.words {
    margin-left: 41px;
}

.proof {
    margin: 0 36px 0 38px;
}

.view {
    display: flex;
    align-items: center;
    height: 100%;
    margin-left: auto;
    padding-right: 48px;
}

.focus {
    gap: 14px;
    margin-right: 22px;
}

.vbtn {
    width: 72px;
    height: 100%;
}

.current {
    background: #5c5c5c;
}

.zbtn {
    width: 16px;
    margin: 0 14px;
}

.zoom {
    appearance: none;
    width: 200px;
    height: 8px;
    margin: 0;
    border-radius: 4px;
    background: #7c7c7c;
}

.zoom::-webkit-slider-thumb {
    appearance: none;
    width: 32px;
    height: 32px;
    border-radius: 16px;
    background: #a3a3a3;
}

.percent {
    margin-left: 21px;
}
```
FILE: script.js
```
const CM = 73.7        // one centimetre at 130%
const TAB = 93.6       // default tab stop

const hruler = document.getElementById("hruler")
const vruler = document.getElementById("vruler")

function rect(x, y, w, h, color) {
    return `<rect x="${x}" y="${y}" width="${w}" height="${h}" fill="${color}"/>`
}

function drawHorizontal() {
    const zero = 163
    const end = 1398
    let out = rect(-4, 0, zero + 4, 32, "#242424") + rect(end, 0, 189, 32, "#242424")
    out += rect(-4, 30, zero + 4, 2, "#3c3c3c") + rect(end, 30, 189, 2, "#3c3c3c")

    for (let q = -9; q <= 77; q++) {
        const x = Math.round(zero + q * CM / 4)
        const tall = Math.abs(q % 4) == 2
        out += rect(x, tall ? 12 : 22, 2, tall ? 18 : 8, "#a0a0a4")
        if (q % 4 == 0 && q != 0) {
            out += `<text x="${x + 1}" y="16">${Math.abs(q / 4)}</text>`
        }
    }
    for (let t = 2; t <= 13; t++) {
        out += rect(Math.round(zero + t * TAB), 32, 2, 6, "#777")
    }

    // indent markers
    out += `<path d="M206 0h18v3l-9 8-9-8z" fill="#ddd"/>`
    out += `<path d="M252 28v-5l9-8 9 8v5zM252 31h18v9h-18z" fill="#ddd"/>`
    out += `<path d="M1389 28v-5l9-8 9 8v5z" fill="#ddd"/>`
    hruler.innerHTML = out
}

function drawVertical() {
    const zero = 84
    let out = rect(0, 12, 32, zero - 12, "#242424") + rect(30, 12, 2, zero - 12, "#3c3c3c")

    for (let q = -3; q <= 73; q++) {
        const y = Math.round(zero + q * CM / 4)
        const tall = Math.abs(q % 4) == 2
        out += rect(tall ? 12 : 22, y, tall ? 18 : 8, 2, "#a0a0a4")
        if (q % 4 == 0 && q > 0) {
            out += `<text transform="translate(17 ${y - 2}) rotate(-90)">${q / 4}</text>`
        }
    }
    vruler.innerHTML = out
}

drawHorizontal()
drawVertical()
```
